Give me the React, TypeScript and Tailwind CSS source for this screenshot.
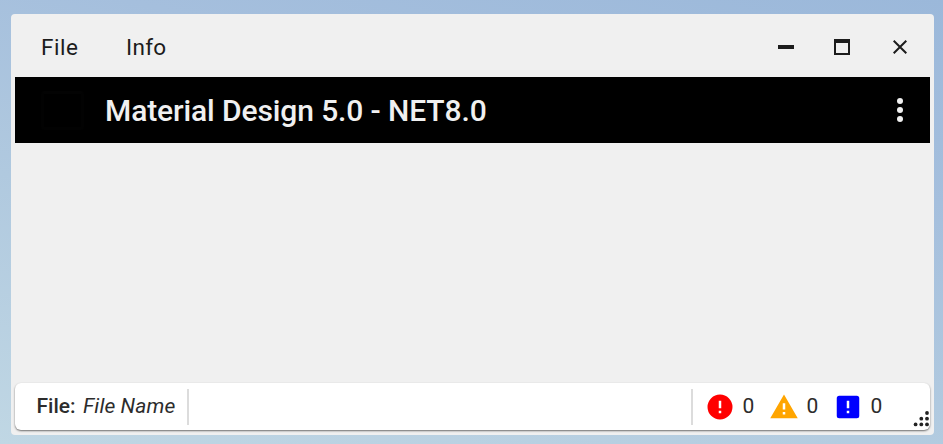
import React from "react";

const paths = {
  error: "M13 13h-2V7h2m0 10h-2v-2h2M12 2A10 10 0 0 0 2 12a10 10 0 0 0 10 10 10 10 0 0 0 10-10A10 10 0 0 0 12 2Z",
  warning: "M13 14h-2V9h2m0 9h-2v-2h2M1 21h22L12 2 1 21Z",
  notice: "M5 3h14a2 2 0 0 1 2 2v14a2 2 0 0 1-2 2H5a2 2 0 0 1-2-2V5a2 2 0 0 1 2-2m8 10V7h-2v6h2m0 4v-2h-2v2h2Z",
};

function Counter({ path, color }: { path: string; color: string }) {
  return (
    <div className="flex w-16 items-center">
      <svg viewBox="0 0 24 24" className={"h-[30px] w-[30px] shrink-0 " + color} fill="currentColor">
        <path fillRule="evenodd" d={path} />
      </svg>
      <span className="ml-[8px] pt-px">0</span>
    </div>
  );
}

export default function App() {
  return (
    <div className="h-[444px] w-[943px] bg-[linear-gradient(194deg,#9bb8da_0%,#a5bfdd_30%,#b0c9df_60%,#c0d7e4_100%)] pl-[11px] pt-[14px] font-['Roboto',sans-serif]">
      <div className="flex h-[421px] w-[923px] flex-col rounded-[4px] bg-[#f0f0f0] px-1">
        <header className="flex h-[63px] shrink-0 items-center pl-[26px] pr-[23px] pt-[3px] text-[22.5px] text-[#1c1c1c]">
          <span className="w-[85px] pt-[2px] tracking-[0.5px]">File</span>
          <span className="pt-[2px] tracking-[0.3px]">Info</span>
          <div className="ml-auto flex items-center">
            <div className="h-1 w-4 bg-[#1c1c1c]" />
            <div className="ml-10 h-4 w-4 border-2 border-t-4 border-[#1c1c1c]" />
            <svg className="ml-[43px] h-[14px] w-[14px]" viewBox="0 0 14 14" stroke="#1c1c1c" strokeWidth="2">
              <path d="M.7.7 13.3 13.3M13.3.7.7 13.3" />
            </svg>
          </div>
        </header>
        <div className="flex h-[66px] shrink-0 items-center bg-black pl-[26px] pr-[27px]">
          <div className="h-[39px] w-[43px] rounded-[3px] border-[3px] border-[#020202] border-t-[#030303]" />
          <h1 className="ml-[21px] whitespace-nowrap pt-[2px] text-[30px] font-medium leading-none tracking-[-0.11px] text-[#f0f0f0]">Material Design 5.0 - NET8.0</h1>
          <svg className="ml-auto h-6 w-[6px]" viewBox="0 0 6 24" fill="#f0f0f0">
            <circle cx="3" cy="3" r="3" />
            <circle cx="3" cy="12" r="3" />
            <circle cx="3" cy="21" r="3" />
          </svg>
        </div>
        <main className="grow" />
        <footer className="mb-[5px] flex h-[47px] shrink-0 items-center rounded-[6px] bg-white pl-[21.5px] text-[21px] text-[#2c2c2c] shadow-[0_1px_2px_rgba(0,0,0,0.55)]">
          <span className="w-[46.5px] whitespace-nowrap pt-px font-medium">File:</span>
          <span className="w-[103.5px] whitespace-nowrap pt-px italic tracking-[0.1px]">File Name</span>
          <div className="h-9 w-[2px] bg-[#dcdcdc]" />
          <div className="ml-auto h-9 w-[2px] bg-[#dcdcdc]" />
          <div className="ml-[11.5px] flex">
            <Counter path={paths.error} color="text-[#ff0000]" />
            <Counter path={paths.warning} color="text-[#ffa500]" />
            <Counter path={paths.notice} color="text-[#0000ff]" />
          </div>
          <svg className="mb-[3.5px] ml-[16px] mr-[1.5px] h-[16px] w-[16px] self-end" viewBox="0 0 16 16" fill="#222">
            <circle cx="14" cy="2" r="1.9" />
            <circle cx="8.3" cy="7.7" r="1.9" />
            <circle cx="14" cy="7.7" r="1.9" />
            <circle cx="2.6" cy="13.4" r="1.9" />
            <circle cx="8.3" cy="13.4" r="1.9" />
            <circle cx="14" cy="13.4" r="1.9" />
          </svg>
        </footer>
      </div>
    </div>
  );
}
